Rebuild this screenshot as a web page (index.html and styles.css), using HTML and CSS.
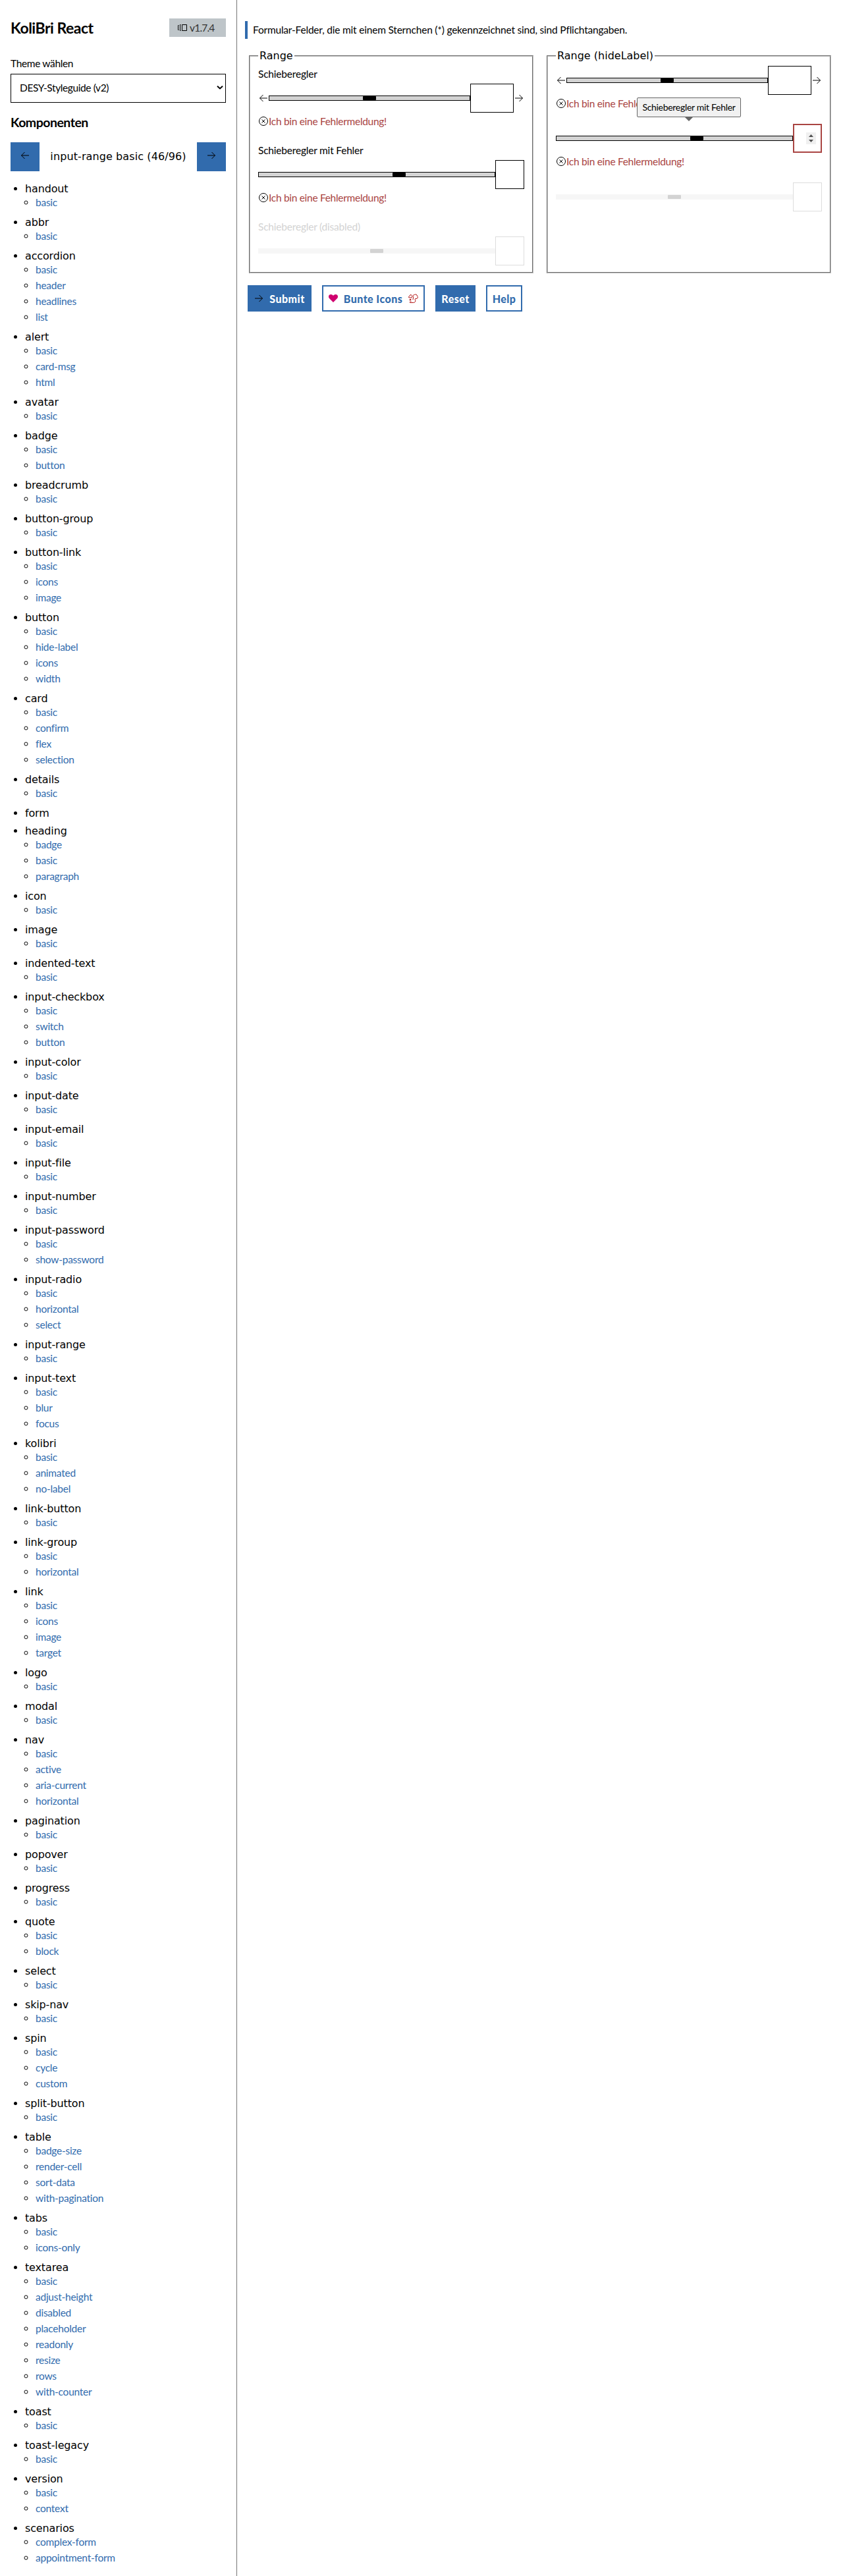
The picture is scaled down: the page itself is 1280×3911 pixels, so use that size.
FILE: index.html
```html
<!DOCTYPE html>
<html lang="de">
<head>
<meta charset="utf-8">
<title>KoliBri React</title>
<link rel="stylesheet" href="styles.css">
</head>
<body>
<svg class="defs" aria-hidden="true">
  <symbol id="left" viewBox="0 0 14 14"><path d="M13 7H1.5M6.5 2L1.5 7l5 5" fill="none" stroke="currentColor"/></symbol>
  <symbol id="right" viewBox="0 0 14 14"><path d="M1 7h11.5M7.500 2l5 5l-5 5" fill="none" stroke="currentColor"/></symbol>
  <symbol id="error" viewBox="0 0 16 16"><path d="M5.500 5.500l5 5m0-5l-5 5" fill="none" stroke="currentColor"/><circle cx="8" cy="8" r="6.500" fill="none" stroke="currentColor"/></symbol>
</svg>
<div class="app">
<aside class="sidebar">
  <header class="brand">
    <h1 class="title">KoliBri React</h1>
    <span class="version"><svg class="version-icon" width="14" height="12" viewBox="0 0 14 12"><path d="M6.500 1.500h7v9h-7zM4.500 1.500h-1v9h1M1.500 2.500h-1v7h1" fill="none" stroke="#000"/></svg><span class="version-text">v1.7.4</span></span>
  </header>
  <label class="theme-label">Theme wählen</label>
  <div class="select"><span class="select-text">DESY-Styleguide (v2)</span><svg width="10" height="8" viewBox="0 0 10 8"><path d="M1 1.800l4 3.700l4-3.700" fill="none" stroke="#000" stroke-width="2"/></svg></div>
  <h2 class="subtitle">Komponenten</h2>
  <div class="pager">
    <button class="pager-btn"><svg width="14" height="14"><use href="#left"/></svg></button>
    <span class="pager-text">input-range basic (46/96)</span>
    <button class="pager-btn"><svg width="14" height="14"><use href="#right"/></svg></button>
  </div>
  <ul class="nav">
    <li>handout<ul><li>basic</li></ul></li>
    <li>abbr<ul><li>basic</li></ul></li>
    <li>accordion<ul><li>basic</li><li>header</li><li>headlines</li><li>list</li></ul></li>
    <li>alert<ul><li>basic</li><li>card-msg</li><li>html</li></ul></li>
    <li>avatar<ul><li>basic</li></ul></li>
    <li>badge<ul><li>basic</li><li>button</li></ul></li>
    <li>breadcrumb<ul><li>basic</li></ul></li>
    <li>button-group<ul><li>basic</li></ul></li>
    <li>button-link<ul><li>basic</li><li>icons</li><li>image</li></ul></li>
    <li>button<ul><li>basic</li><li>hide-label</li><li>icons</li><li>width</li></ul></li>
    <li>card<ul><li>basic</li><li>confirm</li><li>flex</li><li>selection</li></ul></li>
    <li>details<ul><li>basic</li></ul></li>
    <li>form</li>
    <li>heading<ul><li>badge</li><li>basic</li><li>paragraph</li></ul></li>
    <li>icon<ul><li>basic</li></ul></li>
    <li>image<ul><li>basic</li></ul></li>
    <li>indented-text<ul><li>basic</li></ul></li>
    <li>input-checkbox<ul><li>basic</li><li>switch</li><li>button</li></ul></li>
    <li>input-color<ul><li>basic</li></ul></li>
    <li>input-date<ul><li>basic</li></ul></li>
    <li>input-email<ul><li>basic</li></ul></li>
    <li>input-file<ul><li>basic</li></ul></li>
    <li>input-number<ul><li>basic</li></ul></li>
    <li>input-password<ul><li>basic</li><li>show-password</li></ul></li>
    <li>input-radio<ul><li>basic</li><li>horizontal</li><li>select</li></ul></li>
    <li>input-range<ul><li>basic</li></ul></li>
    <li>input-text<ul><li>basic</li><li>blur</li><li>focus</li></ul></li>
    <li>kolibri<ul><li>basic</li><li>animated</li><li>no-label</li></ul></li>
    <li>link-button<ul><li>basic</li></ul></li>
    <li>link-group<ul><li>basic</li><li>horizontal</li></ul></li>
    <li>link<ul><li>basic</li><li>icons</li><li>image</li><li>target</li></ul></li>
    <li>logo<ul><li>basic</li></ul></li>
    <li>modal<ul><li>basic</li></ul></li>
    <li>nav<ul><li>basic</li><li>active</li><li>aria-current</li><li>horizontal</li></ul></li>
    <li>pagination<ul><li>basic</li></ul></li>
    <li>popover<ul><li>basic</li></ul></li>
    <li>progress<ul><li>basic</li></ul></li>
    <li>quote<ul><li>basic</li><li>block</li></ul></li>
    <li>select<ul><li>basic</li></ul></li>
    <li>skip-nav<ul><li>basic</li></ul></li>
    <li>spin<ul><li>basic</li><li>cycle</li><li>custom</li></ul></li>
    <li>split-button<ul><li>basic</li></ul></li>
    <li>table<ul><li>badge-size</li><li>render-cell</li><li>sort-data</li><li>with-pagination</li></ul></li>
    <li>tabs<ul><li>basic</li><li>icons-only</li></ul></li>
    <li>textarea<ul><li>basic</li><li>adjust-height</li><li>disabled</li><li>placeholder</li><li>readonly</li><li>resize</li><li>rows</li><li>with-counter</li></ul></li>
    <li>toast<ul><li>basic</li></ul></li>
    <li>toast-legacy<ul><li>basic</li></ul></li>
    <li>version<ul><li>basic</li><li>context</li></ul></li>
    <li>scenarios<ul><li>complex-form</li><li>appointment-form</li></ul></li>
  </ul>
</aside>
<main class="main">
  <p class="note">Formular-Felder, die mit einem Sternchen (*) gekennzeichnet sind, sind Pflichtangaben.</p>
  <div class="groups">
    <fieldset class="group">
      <legend class="legend">Range</legend>
      <div class="field">
        <label class="label">Schieberegler</label>
        <div class="control"><svg class="arrow" width="14" height="14"><use href="#left"/></svg><div class="track"><i class="thumb"></i></div><div class="number number-wide"></div><svg class="arrow" width="14" height="14"><use href="#right"/></svg></div>
        <div class="error"><svg width="16" height="16"><use href="#error"/></svg><span class="error-text">Ich bin eine Fehlermeldung!</span></div>
      </div>
      <div class="field">
        <label class="label">Schieberegler mit Fehler</label>
        <div class="control"><div class="track track-high"><i class="thumb"></i></div><div class="number"></div></div>
        <div class="error"><svg width="16" height="16"><use href="#error"/></svg><span class="error-text">Ich bin eine Fehlermeldung!</span></div>
      </div>
      <div class="field disabled">
        <label class="label">Schieberegler (disabled)</label>
        <div class="control"><div class="track"><i class="thumb"></i></div><div class="number"></div></div>
      </div>
    </fieldset>
    <fieldset class="group">
      <legend class="legend">Range (hideLabel)</legend>
      <div class="field compact">
        <div class="control"><svg class="arrow" width="14" height="14"><use href="#left"/></svg><div class="track"><i class="thumb"></i></div><div class="number number-wide"></div><svg class="arrow" width="14" height="14"><use href="#right"/></svg></div>
        <div class="error"><svg width="16" height="16"><use href="#error"/></svg><span class="error-text">Ich bin eine Fehlermeldung!</span></div>
      </div>
      <div class="field compact">
        <div class="control"><div class="track track-high"><i class="thumb"></i></div><div class="number number-error"><svg class="spinner" width="15" height="18" viewBox="0 0 15 18"><path d="M0 0h15v18H0z" fill="#f0f0f0"/><path d="M4 7l3.500-4L11 7zM4 11l3.500 4l3.500-4z" fill="#505050"/></svg></div>
        <div class="tooltip"><span class="tooltip-text">Schieberegler mit Fehler</span></div></div>
        <div class="error"><svg width="16" height="16"><use href="#error"/></svg><span class="error-text">Ich bin eine Fehlermeldung!</span></div>
      </div>
      <div class="field compact disabled">
        <div class="control"><div class="track"><i class="thumb"></i></div><div class="number"></div></div>
      </div>
    </fieldset>
  </div>
  <div class="actions">
    <button class="btn btn-primary btn-submit"><svg class="btn-arrow" width="14" height="14"><use href="#right"/></svg><span class="btn-text">Submit</span></button>
    <button class="btn btn-icons"><svg width="14" height="12" viewBox="0 0 14 12"><path d="M7 12L1 6C-1 3.500 0 0 3.500 0C5.200 0 6.500 1 7 2C7.500 1 8.800 0 10.500 0C14 0 15 3.500 13 6z" fill="#d0006f"/></svg><span class="btn-text">Bunte Icons</span><svg width="15" height="14" viewBox="0 0 15 14"><path d="M2.500 13.500H7.500C10.500 13.500 11.500 11 10.500 9.500C9.500 8 10.500 7 12 7.500C14.500 7.500 15 4.500 13.500 3.500C13.500 1 10.500 .5 9.500 1.500C7.500 1.500 6.500 3 7.500 4.500C8 6.500 7 7.500 7 9M2.500 13.500C2 12 3 11.500 4.500 11.500M2 8.500H4M4 8.500L3.500 10L1.500 9.500M.5 5.500C.5 4 1.500 3 3 2.500L3.500 1L5 2.500C6 3.500 6 5 5 6H2L.5 5.500" fill="none" stroke="#b00d0d"/></svg></button>
    <button class="btn btn-primary btn-reset"><span class="btn-text">Reset</span></button>
    <button class="btn btn-help"><span class="btn-text">Help</span></button>
  </div>
</main>
</div>
</body>
</html>
```
FILE: styles.css
```css
* { box-sizing: border-box; }
body { margin: 0; background: #fff; color: #000; font: 16px/24px "DejaVu Sans", sans-serif; font-variant-ligatures: none; }
svg { display: block; flex: none; }
.defs { width: 0; height: 0; position: absolute; }
.app { display: flex; height: 3911px; overflow: hidden; }
.sidebar { width: 360px; flex: none; padding: 28px 16px 0; border-right: 1px solid #767676; }
.brand { display: flex; justify-content: space-between; height: 28px; align-items: center; }
.title, .subtitle, .theme-label, .select, .version, .note, .label, .error, .tooltip, .btn, .nav ul { font-family: Lato, sans-serif; }
.title { margin: 0; font-size: 23px; line-height: 28px; letter-spacing: -.5px; }
.version { display: flex; align-items: center; gap: 4px; width: 86px; height: 28px; padding-left: 13px; background: #bec5c9; color: #333; font-size: 15.5px; letter-spacing: -.8px; }
.theme-label { display: block; margin-top: 28px; font-size: 15.5px; line-height: 24px; letter-spacing: -.35px; }
.select { display: flex; justify-content: space-between; align-items: center; height: 44px; margin-top: 4px; padding: 0 3px 2px 13px; border: 1px solid #000; font-size: 15.5px; letter-spacing: -.4px; }
.subtitle { margin: 18px 0 0; font-size: 19.5px; line-height: 24px; letter-spacing: -.5px; }
.pager { display: flex; justify-content: space-between; align-items: center; margin-top: 18px; }
.pager-btn { display: grid; place-items: center; width: 44px; height: 44px; padding: 0 0 4px; border: 0; background: #316bad; color: #000; }
.pager-text { white-space: nowrap; letter-spacing: .1px; }
.nav { margin: 13px 0 0; padding-left: 22px; line-height: 27px; letter-spacing: -.15px; }
.nav ul { margin: -5px 0 5px; padding-left: 16px; font-size: 15.5px; line-height: 24px; letter-spacing: -.25px; color: #316bad; }
.nav ul > li::marker { color: #000; }

.main { flex: none; width: 904px; padding: 32px 0 0 12px; }
.note { height: 27px; margin: 0; padding-left: 8px; border-left: 4px solid #316bad; line-height: 27px; font-size: 15.5px; letter-spacing: -.2px; }
.groups { display: flex; gap: 20px; margin: 14px 0 0 6px; }
.group { width: 432px; min-width: 0; height: 342px; margin: 0; padding: 0 12px; border: 2px groove #c0c0c0; }
.legend { padding: 0 2px; line-height: 24px; }
.field { height: 116px; padding-top: 3px; }
.label { display: block; height: 27px; line-height: 24px; font-size: 15.5px; letter-spacing: -.2px; }
.control { position: relative; display: flex; align-items: center; height: 44px; }
.arrow { margin: 0 1px; }
.track { display: flex; justify-content: center; flex: 1; height: 8px; background: #d3d3d3; border: 1px solid #000; }
.thumb { width: 20px; height: 6px; background: #000; border-radius: 1px; }
.track-high { padding-left: 68px; }
.number { width: 44px; height: 44px; border: 1px solid #000; background: #fff; }
.number-wide { width: 66px; }
.number-error { display: flex; align-items: center; justify-content: flex-end; border: 2px solid #a94442; padding: 0 7px 0 0; }
.error { display: flex; align-items: center; height: 26px; color: #a94442; line-height: 26px; font-size: 15.5px; letter-spacing: -.3px; }
.error svg { color: #000; }
.disabled { color: #d3d3d3; }
.disabled .track { background: #f6f6f6; border-color: #f6f6f6; }
.disabled .thumb { background: #d3d3d3; }
.disabled .number { border-color: #ddd; }
.compact { height: 88px; }
.compact.disabled { padding-top: 4px; }
.tooltip { position: absolute; left: 123px; top: -40px; display: grid; place-items: center; width: 158px; height: 30px; border: 1px solid #666; border-radius: 2px; background: #f1f1f1; color: #000; font-size: 14px; letter-spacing: -.3px; white-space: nowrap; }
.tooltip::after { content: ""; position: absolute; left: 71px; top: 28px; border: 7px solid transparent; border-bottom: 0; border-top-color: #666; }
.actions { display: flex; gap: 16px; margin: 18px 0 0 4px; }
.btn { display: flex; align-items: center; justify-content: center; height: 40px; padding: 0; border: 2px solid #316bad; background: #fff; color: #316bad; font-size: 16px; font-weight: 900; letter-spacing: .45px; white-space: nowrap; }
.btn-primary { background: #316bad; color: #fff; }
.btn-arrow { color: #000; }
.btn-submit { width: 97px; gap: 9px; }
.btn-icons { width: 156px; gap: 9px; }
.btn-reset { width: 61px; }
.btn-help { width: 55px; }
```
